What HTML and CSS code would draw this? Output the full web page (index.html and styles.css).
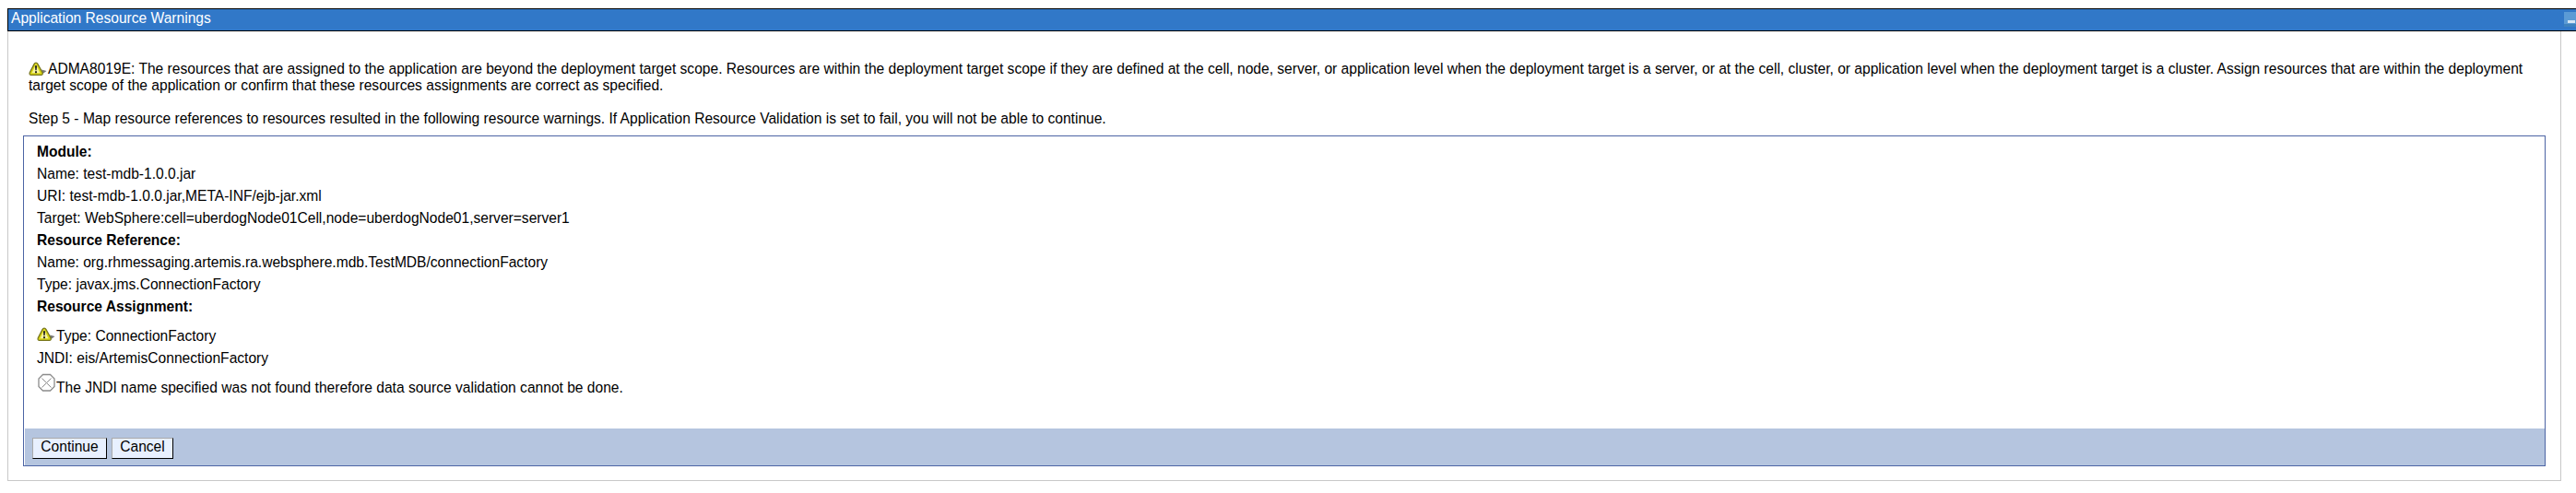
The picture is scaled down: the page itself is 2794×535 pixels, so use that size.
FILE: index.html
```html
<!DOCTYPE html>
<html lang="en">
<head>
<meta charset="utf-8">
<title>Application Resource Warnings</title>
<link rel="stylesheet" href="styles.css">
</head>
<body>
<svg class="defs" width="0" height="0" aria-hidden="true">
  <symbol id="warn" viewBox="0 0 20 16">
    <path d="M14 8.500 19.500 10 15.500 13Z" fill="#777"/>
    <path d="M8 1.200Q9.200 1.200 10 2.600L15 11.800Q15.800 14.200 14 14.300H2.300Q.6 14.200 1.300 11.800L6 2.600Q6.800 1.200 8 1.200Z" fill="#d9d614" stroke="#77751c" stroke-width="1.300"/>
    <path d="M8 3 12.400 12.300H3.600Z" fill="#f6f3a0"/>
    <path d="M7 4.300H9L8.600 9.300H7.400ZM7.100 10.300H8.900V12.200H7.100Z" fill="#111"/>
  </symbol>
</svg>
<header class="titlebar">
  <span>Application Resource Warnings</span>
  <svg class="minimize" width="16" height="16" viewBox="0 0 16 16"><path fill="#5b9bd5" d="M0 0H16V16H0Z"/><path fill="#3f82bd" d="M0 13H16V16H0Z"/><path fill="#d4e6f5" d="M4 9H12V12H4Z"/></svg>
</header>
<main class="panel">
  <p class="message"><svg class="icon" width="20" height="16"><use href="#warn"/></svg>ADMA8019E: The resources that are assigned to the application are beyond the deployment target scope. Resources are within the deployment target scope if they are defined at the cell, node, server, or application level when the deployment target is a server, or at the cell, cluster, or application level when the deployment target is a cluster. Assign resources that are within the deployment<br>target scope of the application or confirm that these resources assignments are correct as specified.</p>
  <p class="step">Step 5 - Map resource references to resources resulted in the following resource warnings. If Application Resource Validation is set to fail, you will not be able to continue.</p>
  <section class="box">
    <div class="rows">
      <div class="row head"><span>Module:</span></div>
      <div class="row"><span>Name: test-mdb-1.0.0.jar</span></div>
      <div class="row"><span>URI: test-mdb-1.0.0.jar,META-INF/ejb-jar.xml</span></div>
      <div class="row"><span>Target: WebSphere:cell=uberdogNode01Cell,node=uberdogNode01,server=server1</span></div>
      <div class="row head"><span>Resource Reference:</span></div>
      <div class="row"><span>Name: org.rhmessaging.artemis.ra.websphere.mdb.TestMDB/connectionFactory</span></div>
      <div class="row"><span>Type: javax.jms.ConnectionFactory</span></div>
      <div class="row head"><span>Resource Assignment:</span></div>
      <div class="row tall"><svg class="icon row-icon" width="20" height="16"><use href="#warn"/></svg><span>Type: ConnectionFactory</span></div>
      <div class="row"><span>JNDI: eis/ArtemisConnectionFactory</span></div>
      <div class="row tall"><svg class="missing" width="20" height="20" viewBox="0 0 20 20" fill="none" stroke="#8c8c8c"><path stroke-width="1.300" d="M6.500 1.500H14.500L19 6V14.500L14.500 19H6.500L2 14.500V6Z"/><path d="M5.500 5.500 15.500 15.500M15.500 5.500 5.500 15.500"/></svg><span>The JNDI name specified was not found therefore data source validation cannot be done.</span></div>
    </div>
    <footer class="actions">
      <button class="btn continue">Continue</button>
      <button class="btn cancel">Cancel</button>
    </footer>
  </section>
</main>
</body>
</html>
```
FILE: styles.css
```css
* { box-sizing: border-box; }
body {
  margin: 0;
  padding: 9px 0 0 8px;
  background: #fff;
  color: #000;
  font: 15.58px/18px "Liberation Sans", Arial, sans-serif;
  overflow: hidden;
}
.defs { position: absolute; }
p { margin: 0; white-space: nowrap; }
.titlebar {
  display: flex;
  justify-content: space-between;
  width: 2790px;
  height: 25px;
  padding: 1px 0 0 3px;
  border: 1px solid #000;
  background: #3178c8;
  color: #fff;
}
.minimize { flex: none; margin: 2px 0 0; }
.panel {
  width: 2770px;
  height: 488px;
  padding: 32px 16px 0;
  border: 1px solid #c8c8c8;
  border-top: 0;
}
.message, .step { padding-left: 6px; }
.message { height: 54px; }
.icon { display: inline-block; width: 20px; height: 16px; margin-right: 1px; vertical-align: 0; }
.message .icon { vertical-align: -1px; margin-bottom: -2px; }
.step { height: 27px; }
.box {
  display: flex;
  flex-direction: column;
  height: 359px;
  border: 1px solid #4c64a4;
}
.rows { flex: 1; padding: 3px 0 0 14px; }
.row { display: flex; align-items: flex-end; height: 24px; padding-bottom: 1px; white-space: nowrap; }
.head { font-weight: bold; }
.tall { height: 32px; }
.row-icon { margin: 0 1px 3px 0; }
.missing { flex: none; margin: 0 1px 5px 0; }
.actions {
  display: flex;
  gap: 5px;
  height: 40px;
  margin-left: 1px;
  padding: 10px 8px;
  background: #b5c5df;
}
.btn {
  height: 23px;
  padding: 0 0 3px;
  border: 1px solid;
  border-color: #aaa #000 #000 #aaa;
  background: #e8f0ff;
  color: #000;
  font: inherit;
}
.continue { width: 81px; }
.cancel { width: 67px; }
```
